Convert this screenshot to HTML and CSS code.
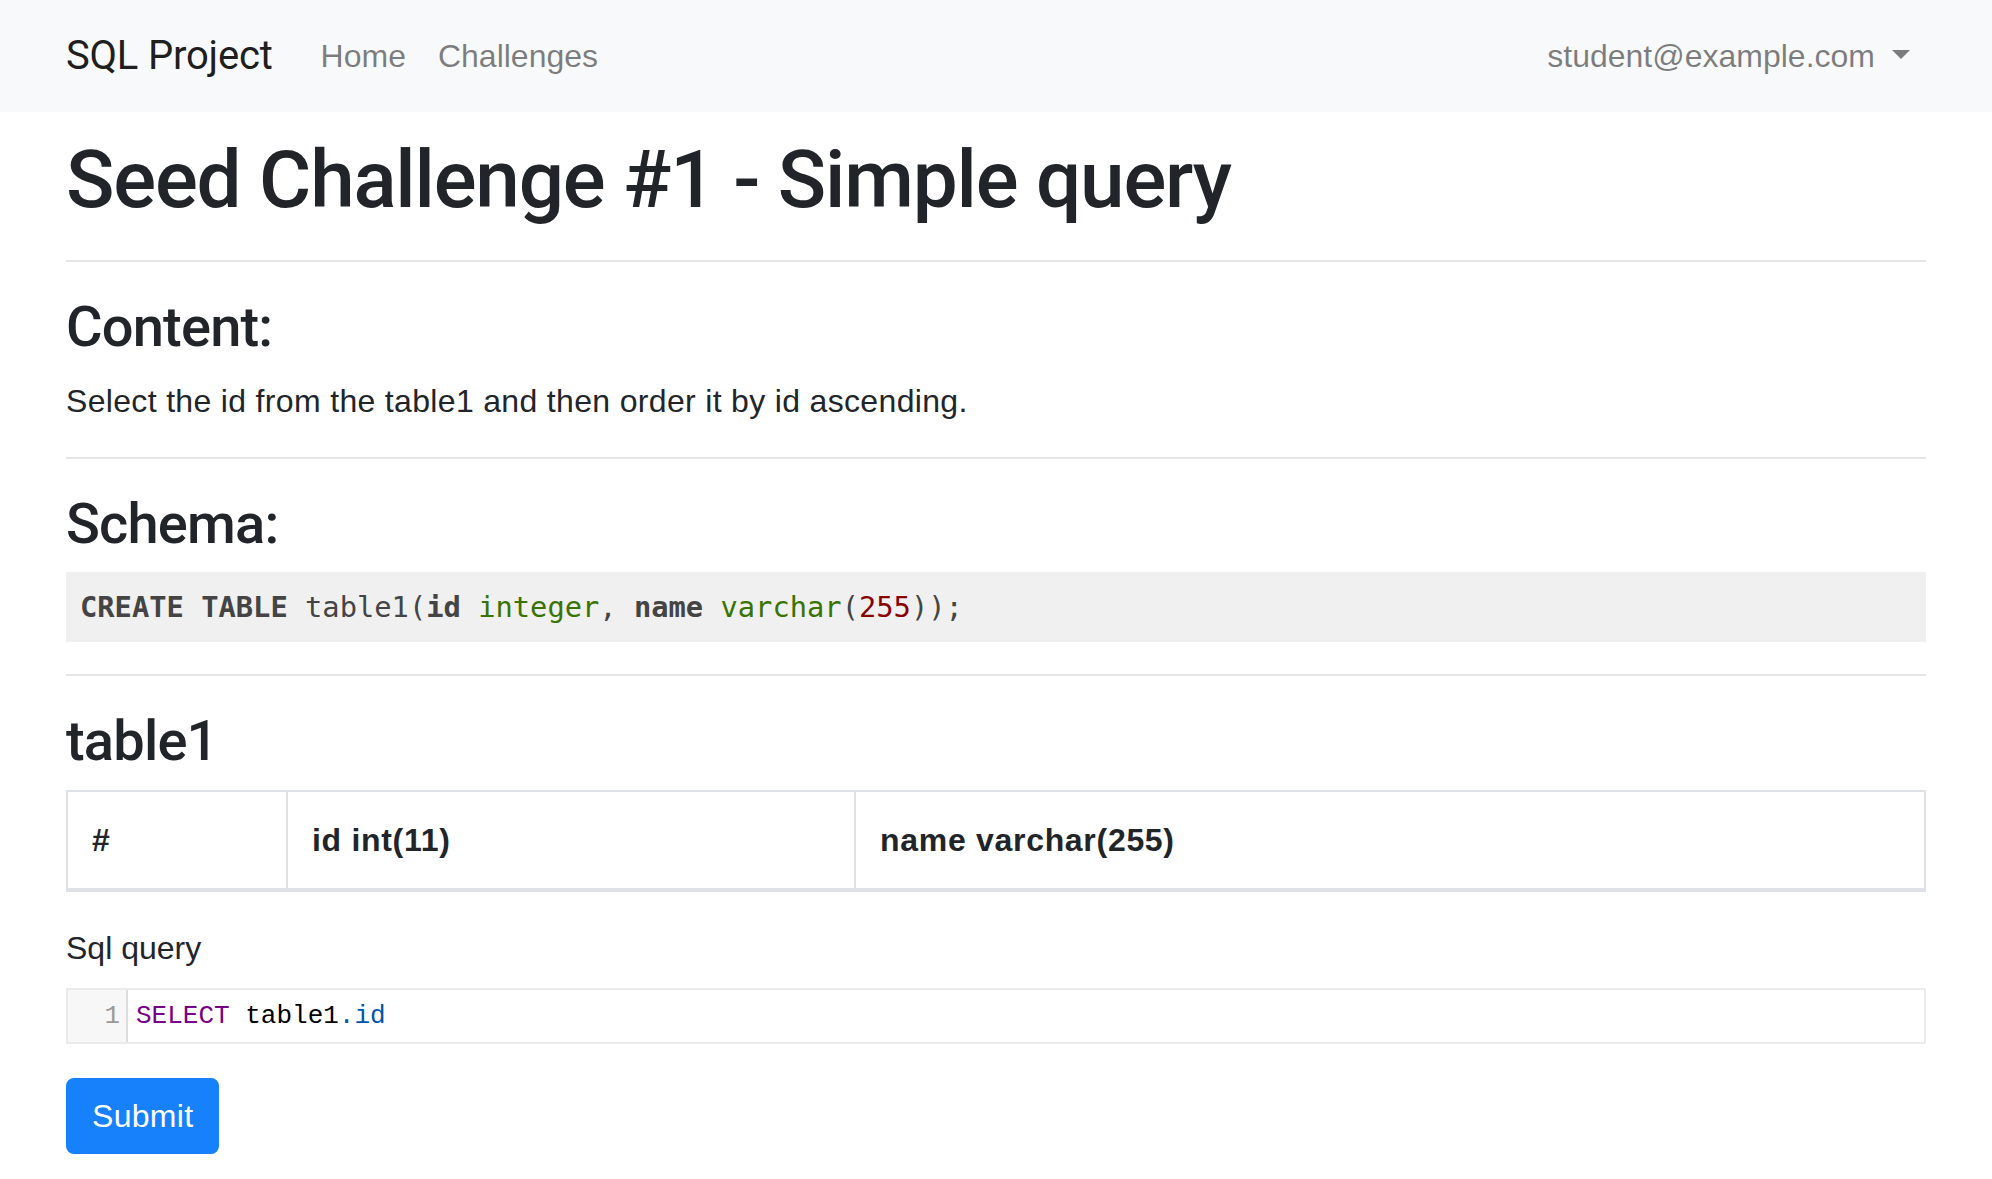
FILE: index.html
```html
<!DOCTYPE html>
<html lang="en">
<head>
<meta charset="utf-8">
<title>Seed Challenge #1 - Simple query</title>
<link rel="stylesheet" href="styles.css">
</head>
<body>
<nav class="navbar">
  <div class="container nav-inner">
    <a class="brand" href="#">SQL Project</a>
    <ul class="nav-list nav-main">
      <li><a class="nav-link" href="#">Home</a></li>
      <li><a class="nav-link" href="#">Challenges</a></li>
    </ul>
    <ul class="nav-list">
      <li><a class="nav-link nav-user" href="#">student@example.com<span class="caret"></span></a></li>
    </ul>
  </div>
</nav>

<main class="container main">
  <h1 class="title">Seed Challenge #1 - Simple query</h1>
  <hr class="rule">
  <h3 class="section-title">Content:</h3>
  <p class="content-text">Select the id from the table1 and then order it by id ascending.</p>
  <hr class="rule">
  <h3 class="section-title">Schema:</h3>
  <pre class="schema"><span class="kw">CREATE</span> <span class="kw">TABLE</span> table1(<span class="kw">id</span> <span class="bi">integer</span>, <span class="kw">name</span> <span class="bi">varchar</span>(<span class="num">255</span>));</pre>
  <hr class="rule">
  <h3 class="section-title">table1</h3>
  <table class="data-table">
    <colgroup>
      <col class="col-idx">
      <col class="col-id">
      <col class="col-name">
    </colgroup>
    <thead>
      <tr>
        <th>#</th>
        <th>id int(11)</th>
        <th>name varchar(255)</th>
      </tr>
    </thead>
  </table>

  <form class="query-form">
    <div class="form-group">
      <label class="form-label">Sql query</label>
      <div class="editor">
        <div class="gutter">1</div>
        <div class="code-line"><span class="cm-keyword">SELECT</span> table1<span class="cm-var2">.id</span></div>
      </div>
    </div>
    <button type="button" class="btn-primary">Submit</button>
  </form>
</main>
</body>
</html>
```

FILE: styles.css
```css
* {
  box-sizing: border-box;
}

html, body {
  margin: 0;
  padding: 0;
  background: #ffffff;
}

body {
  font-family: "Liberation Sans", Arial, sans-serif;
  font-size: 32px;
  line-height: 48px;
  color: #212529;
}

a {
  text-decoration: none;
}

.container {
  width: 1860px;
  margin: 0 auto;
}

/* Navbar */
.navbar {
  background: #f8f9fa;
  padding: 16px 0;
}

.nav-inner {
  display: flex;
  align-items: center;
}

.brand {
  font-family: Roboto, "Liberation Sans", sans-serif;
  font-size: 40px;
  line-height: 60px;
  padding: 10px 0;
  margin-right: 32px;
  letter-spacing: -0.2px;
  color: rgba(0, 0, 0, 0.9);
}

.nav-list {
  list-style: none;
  margin: 0;
  padding: 0;
  display: flex;
}

.nav-main {
  margin-right: auto;
}

.nav-link {
  display: block;
  padding: 16px;
  color: rgba(0, 0, 0, 0.5);
}

.nav-user {
  padding-right: 16px;
}

.caret {
  display: inline-block;
  margin-left: 17px;
  vertical-align: 8px;
  border-top: 9.6px solid currentColor;
  border-left: 9.6px solid transparent;
  border-right: 9.6px solid transparent;
  border-bottom: 0;
}

/* Main */
.main {
  padding-top: 20px;
}

.title {
  font-family: Roboto, "Liberation Sans", sans-serif;
  font-weight: 500;
  font-size: 80px;
  line-height: 96px;
  letter-spacing: -1.2px;
  margin: 0 0 16px;
}

.rule {
  border: 0;
  border-top: 2px solid rgba(0, 0, 0, 0.1);
  margin: 32px 0;
  height: 0;
}

.section-title {
  font-family: Roboto, "Liberation Sans", sans-serif;
  font-weight: 500;
  font-size: 56px;
  line-height: 67.2px;
  letter-spacing: -0.8px;
  margin: 0 0 16px;
}

.content-text {
  margin: 0 0 32px;
  letter-spacing: 0.33px;
}

.schema {
  margin: -2px 0 32px;
  background: #f0f0f0;
  color: #444444;
  padding: 14px;
  font-family: "DejaVu Sans Mono", "Liberation Mono", monospace;
  font-size: 28.75px;
  line-height: 42px;
  white-space: pre;
}

.kw {
  font-weight: bold;
}

.bi {
  color: #397300;
}

.num {
  color: #880000;
}

/* Table */
.data-table {
  width: 100%;
  table-layout: fixed;
  border-collapse: collapse;
  border: 2px solid #dee2e6;
  margin: -2px 0 32px;
}

.col-idx {
  width: 220px;
}

.col-id {
  width: 568px;
}

.data-table th {
  text-align: left;
  font-weight: 700;
  padding: 24px;
  line-height: 48px;
  border: 2px solid #dee2e6;
  border-bottom-width: 4px;
  vertical-align: bottom;
  letter-spacing: 0.7px;
}

/* Form */
.query-form {
  margin: 0;
}

.form-group {
  margin-bottom: 34px;
}

.form-label {
  display: block;
  margin-bottom: 16px;
}

.editor {
  display: flex;
  border: 2px solid #ebebeb;
  font-family: "Liberation Mono", "Courier New", monospace;
  font-size: 26px;
  line-height: 36px;
  color: #000000;
  background: #ffffff;
}

.gutter {
  width: 60px;
  flex: 0 0 60px;
  background: #f7f7f7;
  border-right: 2px solid #dddddd;
  color: #999999;
  text-align: right;
  padding: 8px 6px 8px 0;
}

.code-line {
  flex: 1;
  padding: 8px 8px;
}

.cm-keyword {
  color: #770088;
}

.cm-var2 {
  color: #0055aa;
}

.btn-primary {
  display: inline-block;
  font-family: "Liberation Sans", Arial, sans-serif;
  font-size: 32px;
  line-height: 48px;
  padding: 12px 24px;
  letter-spacing: 0.3px;
  color: #ffffff;
  background: #1780fb;
  border: 2px solid #1780fb;
  border-radius: 8px;
  cursor: pointer;
}
```
